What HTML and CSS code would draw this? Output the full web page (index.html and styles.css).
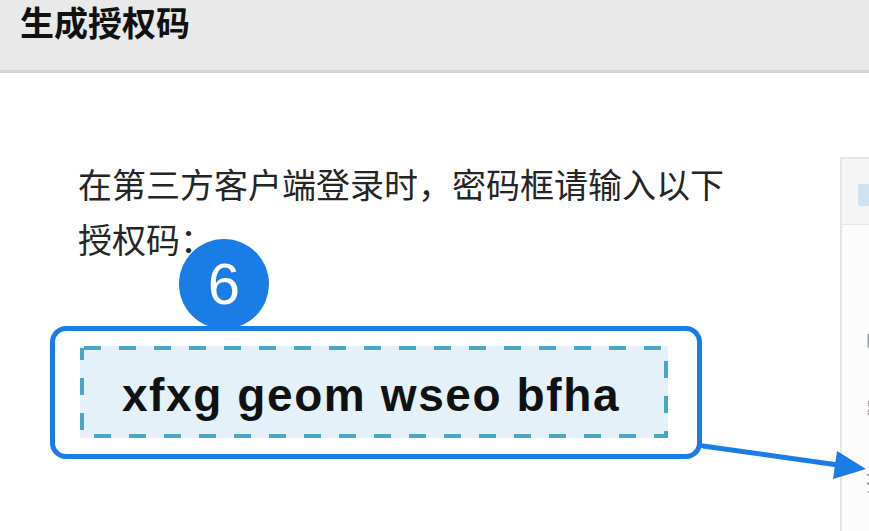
FILE: index.html
```html
<!DOCTYPE html>
<html lang="zh-CN">
<head>
<meta charset="utf-8">
<title>生成授权码</title>
<link rel="stylesheet" href="styles.css">
</head>
<body>
<header class="topbar">
  <h1 class="title">生成授权码</h1>
</header>
<main class="page">
  <section class="content">
    <p class="hint">在第三方客户端登录时，密码框请输入以下授权码：</p>
    <div class="code-card">
      <span class="step">6</span>
      <div class="code-box">
        <svg class="dash" viewBox="0 0 588 92" preserveAspectRatio="none" aria-hidden="true">
          <rect x="2" y="2" width="584" height="88" fill="none" stroke="#4aa6c6" stroke-width="4" stroke-dasharray="17 18" stroke-dashoffset="-2"/>
        </svg>
        <span class="code">xfxg geom wseo bfha</span>
      </div>
      <svg class="arrow" width="220" height="60" viewBox="0 0 220 60" aria-hidden="true">
        <line x1="3" y1="10" x2="138" y2="29" stroke="#1a7de6" stroke-width="5" stroke-linecap="round"/>
        <polygon points="166,33 137,15 133,43" fill="#1a7de6"/>
      </svg>
    </div>
  </section>
  <aside class="side-panel">
    <div class="side-head"><span class="side-tab"></span></div>
    <div class="side-body">
      <div class="side-row">帐号</div>
      <div class="side-row">密码</div>
      <div class="side-row">授权</div>
    </div>
  </aside>
</main>
</body>
</html>
```

FILE: styles.css
```css
html, body {
  margin: 0;
  padding: 0;
  background: #ffffff;
  overflow: hidden;
  width: 869px;
  height: 531px;
}

body {
  font-family: "Noto Sans CJK SC", "Noto Sans", sans-serif;
  color: #222;
}

.topbar {
  height: 70px;
  background: #e9e9e9;
  border-bottom: 3px solid #d4d4d4;
  padding-left: 20px;
  box-sizing: content-box;
}

.title {
  margin: 0;
  font-size: 34px;
  line-height: 44px;
  font-weight: 700;
  color: #111;
  letter-spacing: 0;
}

.page {
  display: flex;
  align-items: flex-start;
  overflow: hidden;
  height: 458px;
}

.content {
  flex: 0 0 840px;
  width: 840px;
  padding-top: 83px;
  box-sizing: border-box;
}

.hint {
  margin: 0 0 0 78px;
  width: 670px;
  font-size: 34px;
  line-height: 55px;
  color: #252525;
}

.code-card {
  position: relative;
  margin: 60px 0 0 50px;
  width: 652px;
  height: 133px;
  box-sizing: border-box;
  border: 5px solid #1a7de6;
  border-radius: 16px;
  background: #fff;
  padding: 15px 0 0 25px;
}

.step {
  position: absolute;
  left: 124px;
  top: -92px;
  width: 90px;
  height: 90px;
  border-radius: 50%;
  background: #1a7de6;
  color: #fff;
  font-family: "Liberation Sans", Arial, sans-serif;
  font-size: 58px;
  line-height: 90px;
  text-align: center;
}

.code-box {
  position: relative;
  width: 588px;
  height: 92px;
  background: #e5f1f9;
  display: flex;
  align-items: center;
  justify-content: center;
}

.dash {
  position: absolute;
  inset: 0;
  width: 100%;
  height: 100%;
}

.code {
  position: relative;
  font-family: "Liberation Sans", Arial, sans-serif;
  font-weight: 700;
  font-size: 46px;
  letter-spacing: 1.6px;
  color: #111;
  margin-top: 6px;
  margin-right: 6px;
}

.arrow {
  position: absolute;
  left: 645px;
  top: 105px;
  overflow: visible;
}

.side-panel {
  flex: 0 0 300px;
  margin-top: 84px;
  height: 400px;
  border: 2px solid #e4e4e4;
  background: #fcfcfc;
}

.side-head {
  height: 66px;
  background: #f5f5f5;
  border-bottom: 1px solid #e6e6e6;
  padding: 25px 0 0 16px;
  box-sizing: border-box;
}

.side-tab {
  display: block;
  width: 40px;
  height: 22px;
  background: #cfe2f2;
  border-radius: 2px;
}

.side-body {
  padding: 80px 0 0 24px;
}

.side-row {
  font-size: 26px;
  line-height: 70px;
  color: #9a9a9a;
}
```
